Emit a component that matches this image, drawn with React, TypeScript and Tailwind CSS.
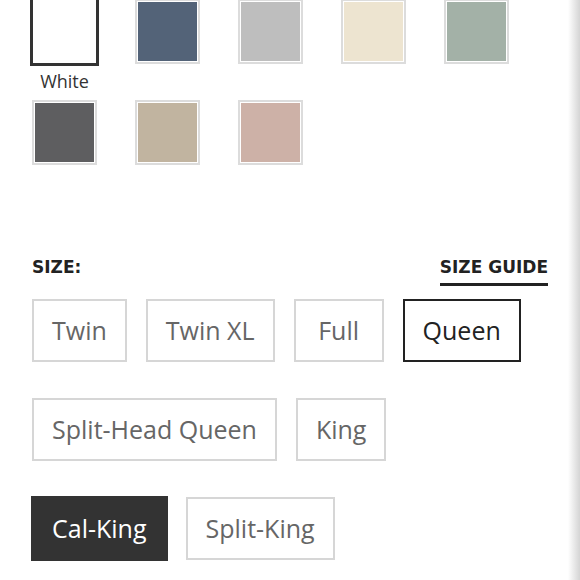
import clsx from "clsx";

type Swatch = { name: string; color: string };

const ROW_ONE: Swatch[] = [
  { name: "White", color: "#ffffff" },
  { name: "Blue", color: "#536378" },
  { name: "Grey", color: "#bebebe" },
  { name: "Cream", color: "#ede4d0" },
  { name: "Sage", color: "#a3b1a7" },
];

const ROW_TWO: Swatch[] = [
  { name: "Charcoal", color: "#5e5e60" },
  { name: "Sand", color: "#c1b4a0" },
  { name: "Blush", color: "#cdb1a7" },
];

const SIZES = ["Twin", "Twin XL", "Full", "Queen", "Split-Head Queen", "King", "Cal-King", "Split-King"];

function SwatchBox({ swatch, selected }: { swatch: Swatch; selected?: boolean }) {
  if (selected) {
    // selected swatch sits 2px proud of the regular frame on every side
    return (
      <div className="-my-[2px] w-[69px] h-[69px] border-[3px] border-[#333] bg-white" />
    );
  }
  return (
    <div className="w-[65px] h-[65px] border-2 border-[#dcdcdc] p-px bg-white">
      <div className="w-full h-full" style={{ backgroundColor: swatch.color }} />
    </div>
  );
}

function SizeButton({ label, state }: { label: string; state: "idle" | "outlined" | "filled" }) {
  return (
    <button
      className={clsx(
        "flex items-center justify-center border-2 text-[25px] leading-none",
        state === "idle" && "h-[63px] min-w-[90px] px-[18px] border-[#d6d6d6] bg-white text-[#666]",
        state === "outlined" && "h-[63px] min-w-[90px] px-[18px] border-[#222] bg-white text-[#222]",
        state === "filled" && "-m-px h-[65px] min-w-[92px] px-[19px] border-[#333] bg-[#333] text-white",
      )}
    >
      {label}
    </button>
  );
}

export default function App() {
  return (
    <div className="w-[580px] h-[580px] overflow-hidden bg-white flex font-['Open_Sans',sans-serif]">
      <main className="flex-1 flex flex-col">
        {/* Colour swatches */}
        <div className="-mt-px ml-[13px] grid grid-cols-[repeat(5,103px)]">
          {ROW_ONE.map((s, i) => (
            <div key={s.name} className="h-[101px] flex flex-col items-center">
              <SwatchBox swatch={s} selected={i === 0} />
              {i === 0 && (
                <span className="mt-[5px] text-[18px] leading-[24px] text-[#333]">{s.name}</span>
              )}
            </div>
          ))}
          {ROW_TWO.map((s) => (
            <div key={s.name} className="h-[65px] flex flex-col items-center">
              <SwatchBox swatch={s} />
            </div>
          ))}
        </div>

        {/* Size header */}
        <div className="mt-[90px] ml-[32px] w-[516px] flex items-start justify-between font-['DejaVu_Sans',sans-serif] font-bold text-[17px] leading-[24px] text-[#222]">
          <span>SIZE:</span>
          <a className="pb-[4px] border-b-[3px] border-[#222]">SIZE GUIDE</a>
        </div>

        {/* Size options */}
        <div className="mt-[13px] ml-[32px] w-[500px] flex flex-wrap gap-x-[19px] gap-y-[36px]">
          {SIZES.map((s) => (
            <SizeButton
              key={s}
              label={s}
              state={s === "Queen" ? "outlined" : s === "Cal-King" ? "filled" : "idle"}
            />
          ))}
        </div>
      </main>
      <div className="w-[12px] h-full bg-gradient-to-r from-white to-[#d4d4d4]" />
    </div>
  );
}
